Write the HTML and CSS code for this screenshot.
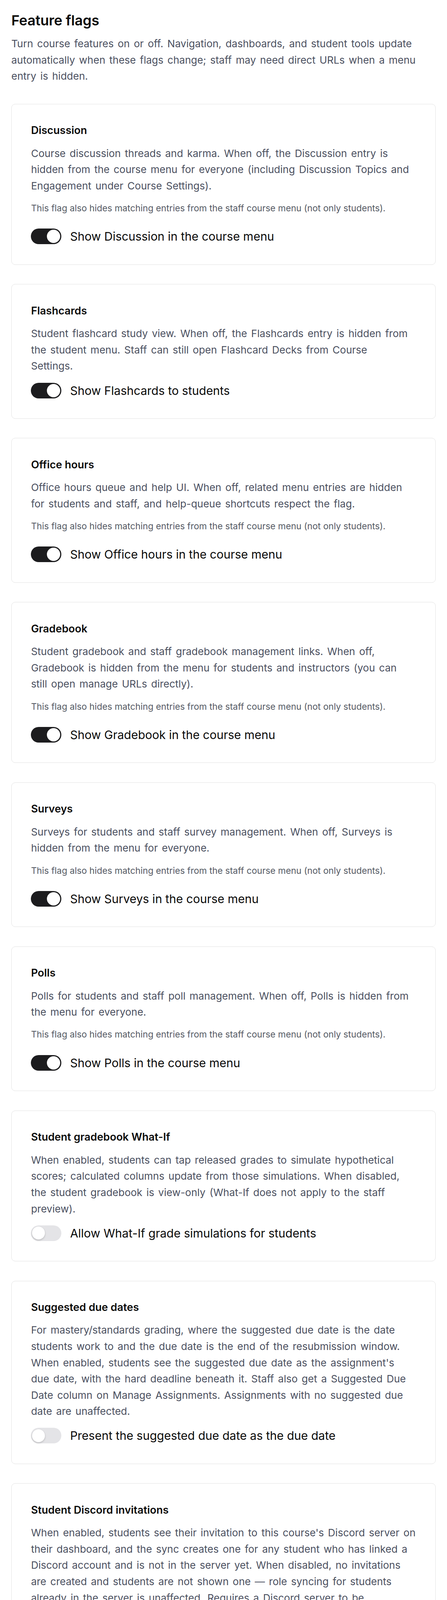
FILE: index.html
```html
<!DOCTYPE html>
<html lang="en">
<head>
  <meta charset="UTF-8" />
  <meta name="viewport" content="width=device-width, initial-scale=1.0" />
  <title>Feature flags</title>
  <link rel="stylesheet" href="styles.css">
</head>
<body>
  <main class="flags">
    <h1>Feature flags</h1>
    <p class="lead">Turn course features on or off. Navigation, dashboards, and student tools update automatically when these flags change; staff may need direct URLs when a menu entry is hidden.</p>

    <section class="card">
      <h3>Discussion</h3>
      <p class="desc">Course discussion threads and karma. When off, the Discussion entry is hidden from the course menu for everyone (including Discussion Topics and Engagement under Course Settings).</p>
      <p class="note">This flag also hides matching entries from the staff course menu (not only students).</p>
      <label class="row"><span class="switch on"><span class="knob"></span></span>Show Discussion in the course menu</label>
    </section>

    <section class="card">
      <h3>Flashcards</h3>
      <p class="desc">Student flashcard study view. When off, the Flashcards entry is hidden from the student menu. Staff can still open Flashcard Decks from Course<br>Settings.</p>
      <label class="row"><span class="switch on"><span class="knob"></span></span>Show Flashcards to students</label>
    </section>

    <section class="card">
      <h3>Office hours</h3>
      <p class="desc">Office hours queue and help UI. When off, related menu entries are hidden for students and staff, and help-queue shortcuts respect the flag.</p>
      <p class="note">This flag also hides matching entries from the staff course menu (not only students).</p>
      <label class="row"><span class="switch on"><span class="knob"></span></span>Show Office hours in the course menu</label>
    </section>

    <section class="card">
      <h3>Gradebook</h3>
      <p class="desc">Student gradebook and staff gradebook management links. When off, Gradebook is hidden from the menu for students and instructors (you can still open manage URLs directly).</p>
      <p class="note">This flag also hides matching entries from the staff course menu (not only students).</p>
      <label class="row"><span class="switch on"><span class="knob"></span></span>Show Gradebook in the course menu</label>
    </section>

    <section class="card">
      <h3>Surveys</h3>
      <p class="desc">Surveys for students and staff survey management. When off, Surveys is hidden from the menu for everyone.</p>
      <p class="note">This flag also hides matching entries from the staff course menu (not only students).</p>
      <label class="row"><span class="switch on"><span class="knob"></span></span>Show Surveys in the course menu</label>
    </section>

    <section class="card">
      <h3>Polls</h3>
      <p class="desc">Polls for students and staff poll management. When off, Polls is hidden from the menu for everyone.</p>
      <p class="note">This flag also hides matching entries from the staff course menu (not only students).</p>
      <label class="row"><span class="switch on"><span class="knob"></span></span>Show Polls in the course menu</label>
    </section>

    <section class="card">
      <h3>Student gradebook What-If</h3>
      <p class="desc">When enabled, students can tap released grades to simulate hypothetical scores; calculated columns update from those simulations. When disabled, the student gradebook is view-only (What-If does not apply to the staff preview).</p>
      <label class="row"><span class="switch"><span class="knob"></span></span>Allow What-If grade simulations for students</label>
    </section>

    <section class="card">
      <h3>Suggested due dates</h3>
      <p class="desc">For mastery/standards grading, where the suggested due date is the date students work to and the due date is the end of the resubmission window. When enabled, students see the suggested due date as the assignment's due date, with the hard deadline beneath it. Staff also get a Suggested Due Date column on Manage Assignments. Assignments with no suggested due date are unaffected.</p>
      <label class="row"><span class="switch"><span class="knob"></span></span>Present the suggested due date as the due date</label>
    </section>

    <section class="card">
      <h3>Student Discord invitations</h3>
      <p class="desc">When enabled, students see their invitation to this course's Discord server on their dashboard, and the sync creates one for any student who has linked a Discord account and is not in the server yet. When disabled, no invitations are created and students are not shown one — role syncing for students already in the server is unaffected. Requires a Discord server to be configured for the course.</p>
      <label class="row"><span class="switch"><span class="knob"></span></span>Let students join this course's Discord server</label>
    </section>
  </main>
</body>
</html>
```

FILE: styles.css
```css
* {
  box-sizing: border-box;
}
body {
  margin: 0;
  font-family: Inter, 'Noto Sans', sans-serif;
  background: #ffffff;
  color: #111111;
}
.flags {
  padding: 30px 29px 0;
}
h1 {
  margin: 0 0 16px;
  font-size: 36px;
  line-height: 45px;
  font-weight: 600;
  letter-spacing: -0.2px;
  color: #0a0a0a;
}
.lead {
  margin: 0 0 50px;
  font-size: 26px;
  line-height: 41.6px;
  word-spacing: 3px;
  color: #4b5060;
}
.card {
  display: flex;
  flex-direction: column;
  gap: 19.5px;
  border: 1px solid #e2e2e2;
  border-radius: 10px;
  padding: 49.4px;
  margin-bottom: 49.5px;
  background: #ffffff;
}
.card h3 {
  margin: 0;
  font-size: 27px;
  line-height: 36px;
  font-weight: 600;
  color: #0a0a0a;
}
.desc {
  margin: 0;
  font-size: 26px;
  line-height: 41.6px;
  word-spacing: 3px;
  color: #4b5060;
}
.note {
  margin: 0 0 14px;
  font-size: 22.75px;
  line-height: 34px;
  color: #555a64;
}
.row {
  display: flex;
  align-items: center;
  gap: 22px;
  height: 44px;
  font-size: 30px;
  line-height: 44px;
  color: #0a0a0a;
}
.switch {
  display: flex;
  align-items: center;
  flex: none;
  width: 78px;
  height: 40px;
  padding: 0 3px;
  border-radius: 20px;
  background: #e4e4e7;
}
.switch .knob {
  width: 33px;
  height: 33px;
  border-radius: 50%;
  background: #ffffff;
  box-shadow: 0 2px 4px rgba(0, 0, 0, 0.2);
}
.switch.on {
  justify-content: flex-end;
  background: #1c1c1e;
}
.switch.on .knob {
  width: 34px;
  height: 34px;
  box-shadow: none;
}
```
